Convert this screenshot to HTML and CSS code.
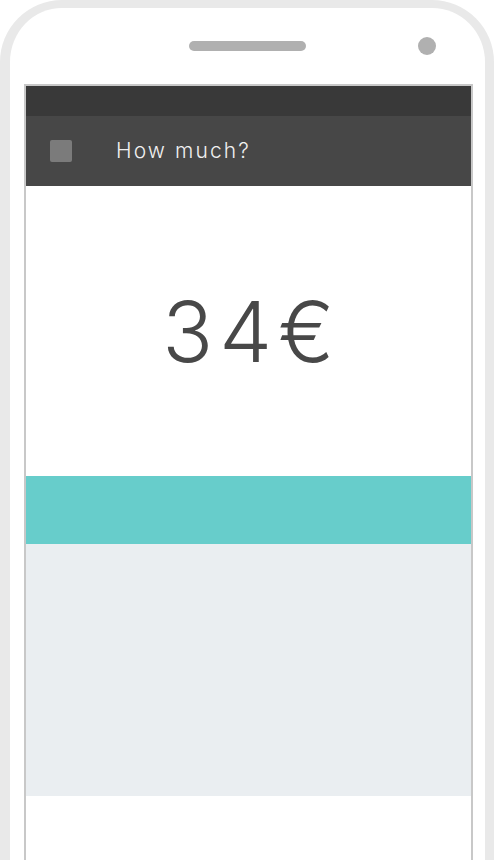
FILE: index.html
```html
<!DOCTYPE html>
<html>
<head>
<meta charset="utf-8">
<link rel="stylesheet" href="styles.css">
</head>
<body>
<div class="phone">
  <div class="phone-top">
    <div class="speaker"></div>
    <div class="camera"></div>
  </div>
  <div class="screen">
    <div class="statusbar"></div>
    <div class="toolbar">
      <div class="menu-icon"></div>
      <div class="title">How much?</div>
    </div>
    <div class="amount">34€</div>
    <div class="accent"></div>
    <div class="panel"></div>
    <div class="rest"></div>
  </div>
</div>
</body>
</html>
```
FILE: styles.css
```css
html, body {
  margin: 0;
  padding: 0;
  background: #ffffff;
}
body {
  width: 494px;
  height: 860px;
  overflow: hidden;
}
.phone {
  box-sizing: border-box;
  width: 494px;
  height: 900px;
  background: #ffffff;
  border: solid #e9e9e9;
  border-width: 8px 9px 0 10px;
  border-radius: 62px 62px 0 0;
  display: flex;
  flex-direction: column;
}
.phone-top {
  height: 76px;
  display: grid;
  grid-template-columns: 1fr 117px 1fr;
  align-items: center;
}
.speaker {
  grid-column: 2;
  height: 10px;
  border-radius: 5px;
  background: #b0b0b0;
  margin-top: -1px;
}
.camera {
  grid-column: 3;
  justify-self: end;
  width: 18px;
  height: 18px;
  border-radius: 50%;
  background: #b0b0b0;
  margin-right: 49px;
}
.screen {
  flex: 1;
  margin: 0 12px 0 14px;
  border: 2px solid #c8c8c8;
  border-bottom: none;
  display: flex;
  flex-direction: column;
}
.statusbar {
  height: 30px;
  background: #393939;
}
.toolbar {
  height: 70px;
  background: #474747;
  display: flex;
  align-items: center;
  padding-left: 24px;
}
.menu-icon {
  width: 22px;
  height: 22px;
  border-radius: 2px;
  background: #7b7b7b;
  margin-right: 44px;
}
.title {
  font-family: "Inter", "Open Sans", sans-serif;
  font-weight: 300;
  font-size: 21px;
  color: #f0f0f0;
  letter-spacing: 2.1px;
  margin-top: -1px;
}
.amount {
  height: 290px;
  display: flex;
  align-items: center;
  justify-content: center;
  font-family: "Inter", "Open Sans", sans-serif;
  font-weight: 300;
  font-size: 84px;
  color: #484848;
  letter-spacing: 6px;
  padding-left: 6px;
}
.accent {
  height: 68px;
  background: #67cdcb;
}
.panel {
  height: 252px;
  background: #eaeef1;
}
.rest {
  flex: 1;
  background: #ffffff;
}
```
